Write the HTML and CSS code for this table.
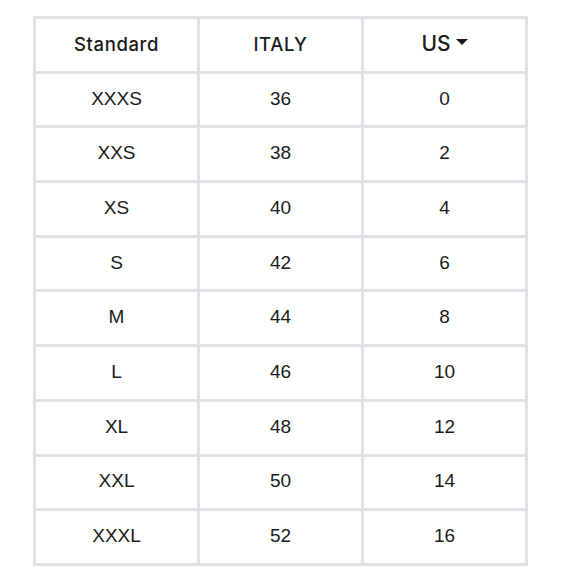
FILE: index.html
```html
<!DOCTYPE html>
<html>
<head>
<meta charset="utf-8">
<link rel="stylesheet" href="styles.css">
</head>
<body>
<div class="page">
  <div class="size-table">
    <div class="cell head">Standard</div>
    <div class="cell head">ITALY</div>
    <div class="cell head us">US <span class="caret"></span></div>
    <div class="cell">XXXS</div><div class="cell">36</div><div class="cell">0</div>
    <div class="cell">XXS</div><div class="cell">38</div><div class="cell">2</div>
    <div class="cell">XS</div><div class="cell">40</div><div class="cell">4</div>
    <div class="cell">S</div><div class="cell">42</div><div class="cell">6</div>
    <div class="cell">M</div><div class="cell">44</div><div class="cell">8</div>
    <div class="cell">L</div><div class="cell">46</div><div class="cell">10</div>
    <div class="cell">XL</div><div class="cell">48</div><div class="cell">12</div>
    <div class="cell">XXL</div><div class="cell">50</div><div class="cell">14</div>
    <div class="cell">XXXL</div><div class="cell">52</div><div class="cell">16</div>
  </div>
</div>
</body>
</html>
```
FILE: styles.css
```css
html, body {
  margin: 0;
  padding: 0;
  background: #ffffff;
}
.page {
  padding: 16px 0 0 33px;
}
.size-table {
  display: grid;
  grid-template-columns: 161px 161px 161px;
  grid-auto-rows: 51.7px;
  gap: 3px;
  padding: 3px;
  width: max-content;
  background: #dfe2e6;
  font-family: "Liberation Sans", Arial, sans-serif;
  color: #1b1b1b;
}
.cell {
  background: #ffffff;
  display: flex;
  align-items: center;
  justify-content: center;
  font-size: 19px;
  padding-bottom: 2px;
}
.head {
  font-family: Inter, "Liberation Sans", sans-serif;
  font-size: 18.5px;
  font-weight: 500;
  letter-spacing: 0.6px;
  padding-bottom: 2px;
}
.us {
  font-size: 21px;
  letter-spacing: 0;
}
.caret {
  display: inline-block;
  width: 0;
  height: 0;
  margin-left: 5px;
  border-left: 6px solid transparent;
  border-right: 6px solid transparent;
  border-top: 6px solid #1b1b1b;
  position: relative;
  top: -2px;
}
```
